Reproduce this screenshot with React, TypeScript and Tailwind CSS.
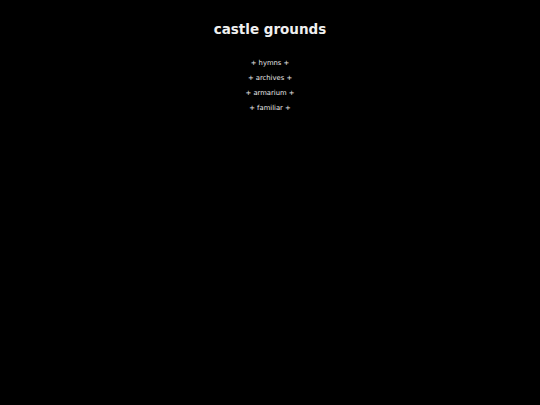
export default function App() {
  const links = ['hymns', 'archives', 'armarium', 'familiar'];
  return (
    <div className="min-h-[405px] w-full bg-black text-[#e8e8e8] [font-family:'DejaVu_Sans',Verdana,sans-serif]">
      <div className="flex flex-col items-center pt-[21px]">
        <h1 className="text-[13.5px] font-bold leading-[17px] text-[#f0f0f0]">castle grounds</h1>
        <ul className="mt-[18px] flex flex-col items-center text-[6.8px] leading-[15px]">
          {links.map(l => (
            <li key={l}>
              <a href="#">+ {l} +</a>
            </li>
          ))}
        </ul>
      </div>
    </div>
  );
}
